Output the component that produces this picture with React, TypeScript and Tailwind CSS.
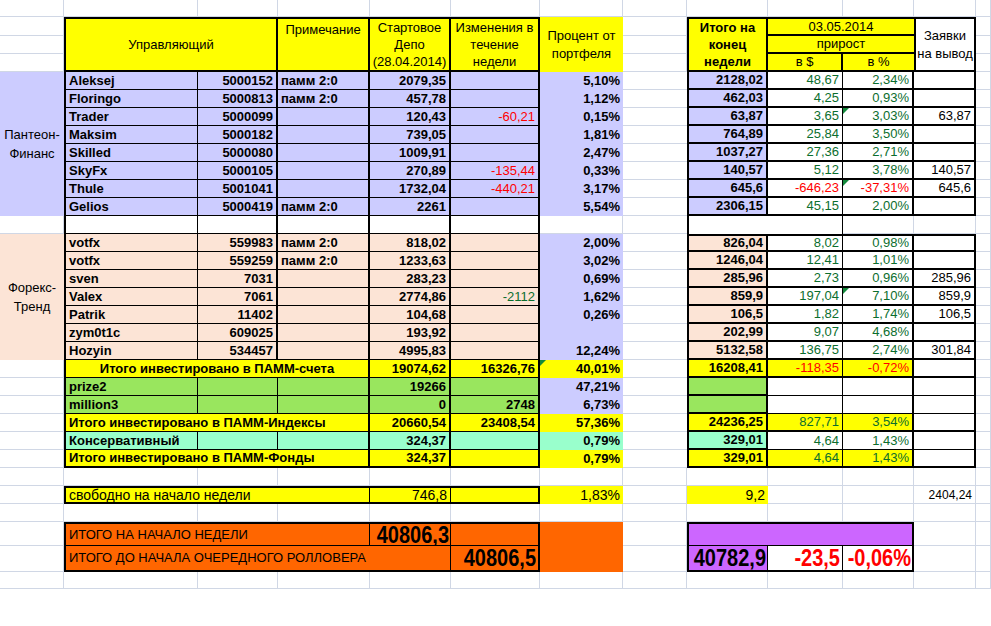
import React from "react";

const A = "w-[64px]";
const B = "w-[134px]";
const C = "w-[80px]";
const D = "w-[92px]";
const E = "w-[81px]";
const F = "w-[89px]";
const G = "w-[83px]";
const H = "w-[64px]";
const I = "w-[81px]";
const J = "w-[75px]";
const K = "w-[71px]";
const L = "w-[62px]";
const M = "w-[15px]";
const COLS = [A, B, C, D, E, F, G, H, I, J, K, L, M];

const GRID = "border-r border-b border-[#d0d7e5]";
const LAV = "bg-[#ccccff]";
const PEACH = "bg-[#fce4d6]";
const YEL = "bg-[#ffff00]";
const LIME = "bg-[#99e65e]";
const MINT = "bg-[#99ffcc]";
const ORANGE = "bg-[#ff6600]";
const VIOLET = "bg-[#cc66ff]";
const RED = "text-[#ff0000]";
const GREEN = "text-[#0b6e2e]";
const BIG = "text-[20px] font-bold";

type CellProps = {
  w: string;
  h?: string;
  p?: string;
  className?: string;
  children?: React.ReactNode;
};

function Cell({ w, h = "h-full", p = "px-[3px]", className = "", children }: CellProps) {
  return (
    <div className={`relative flex shrink-0 items-center overflow-hidden whitespace-nowrap ${w} ${h} ${p} ${className}`}>
      {children}
    </div>
  );
}

// the big totals are set in a tall narrow face in the sheet
function Tall({ children }: { children: React.ReactNode }) {
  return <span className="inline-block scale-y-[1.15]">{children}</span>;
}

// excel's little green "error" corner
function Flag() {
  return <span className="absolute left-0 top-0 h-0 w-0 border-t-[6px] border-r-[6px] border-t-[#138a3c] border-r-transparent" />;
}

function BlankRow({ h }: { h: string }) {
  return (
    <div className={`flex ${h}`}>
      {COLS.map((w, i) => (
        <Cell key={i} w={w} className={GRID} />
      ))}
    </div>
  );
}

function GridStack({ w, hs }: { w: string; hs: string[] }) {
  return (
    <div className="flex flex-col">
      {hs.map((h, i) => (
        <Cell key={i} w={w} h={h} className={GRID} />
      ))}
    </div>
  );
}

type Manager = {
  name: string;
  id: string;
  note: string;
  start: string;
  change: string;
  pct: string;
  end: string;
  usd: string;
  rate: string;
  out: string;
  flag?: boolean;
};

const panteon: Manager[] = [
  { name: "Aleksej", id: "5000152", note: "памм 2:0", start: "2079,35", change: "", pct: "5,10%", end: "2128,02", usd: "48,67", rate: "2,34%", out: "" },
  { name: "Floringo", id: "5000813", note: "памм 2:0", start: "457,78", change: "", pct: "1,12%", end: "462,03", usd: "4,25", rate: "0,93%", out: "" },
  { name: "Trader", id: "5000099", note: "", start: "120,43", change: "-60,21", pct: "0,15%", end: "63,87", usd: "3,65", rate: "3,03%", out: "63,87", flag: true },
  { name: "Maksim", id: "5000182", note: "", start: "739,05", change: "", pct: "1,81%", end: "764,89", usd: "25,84", rate: "3,50%", out: "" },
  { name: "Skilled", id: "5000080", note: "", start: "1009,91", change: "", pct: "2,47%", end: "1037,27", usd: "27,36", rate: "2,71%", out: "" },
  { name: "SkyFx", id: "5000105", note: "", start: "270,89", change: "-135,44", pct: "0,33%", end: "140,57", usd: "5,12", rate: "3,78%", out: "140,57" },
  { name: "Thule", id: "5001041", note: "", start: "1732,04", change: "-440,21", pct: "3,17%", end: "645,6", usd: "-646,23", rate: "-37,31%", out: "645,6", flag: true },
  { name: "Gelios", id: "5000419", note: "памм 2:0", start: "2261", change: "", pct: "5,54%", end: "2306,15", usd: "45,15", rate: "2,00%", out: "" },
];

const forex: Manager[] = [
  { name: "votfx", id: "559983", note: "памм 2:0", start: "818,02", change: "", pct: "2,00%", end: "826,04", usd: "8,02", rate: "0,98%", out: "" },
  { name: "votfx", id: "559259", note: "памм 2:0", start: "1233,63", change: "", pct: "3,02%", end: "1246,04", usd: "12,41", rate: "1,01%", out: "" },
  { name: "sven", id: "7031", note: "", start: "283,23", change: "", pct: "0,69%", end: "285,96", usd: "2,73", rate: "0,96%", out: "285,96" },
  { name: "Valex", id: "7061", note: "", start: "2774,86", change: "-2112", pct: "1,62%", end: "859,9", usd: "197,04", rate: "7,10%", out: "859,9", flag: true },
  { name: "Patrik", id: "11402", note: "", start: "104,68", change: "", pct: "0,26%", end: "106,5", usd: "1,82", rate: "1,74%", out: "106,5" },
  { name: "zym0t1c", id: "609025", note: "", start: "193,92", change: "", pct: "", end: "202,99", usd: "9,07", rate: "4,68%", out: "" },
  { name: "Hozyin", id: "534457", note: "", start: "4995,83", change: "", pct: "12,24%", end: "5132,58", usd: "136,75", rate: "2,74%", out: "301,84" },
];

function ManagerRow({ r, bg, changeColor, first }: { r: Manager; bg: string; changeColor: string; first?: boolean }) {
  const tone = r.usd.startsWith("-") ? RED : GREEN;
  const top = first ? "border-t-2" : "";
  return (
    <div className="flex h-[18px]">
      <Cell w={B} className={`${bg} border-l-2 border-r border-b border-black font-bold`}>{r.name}</Cell>
      <Cell w={C} className={`${bg} justify-end border-r-2 border-b border-black font-bold`}>{r.id}</Cell>
      <Cell w={D} className={`${bg} border-r-2 border-b border-black font-bold`}>{r.note}</Cell>
      <Cell w={E} className={`${bg} justify-end border-r-2 border-b border-black font-bold`}>{r.start}</Cell>
      <Cell w={F} className={`${bg} justify-end border-r-2 border-b border-black ${changeColor}`}>{r.change}</Cell>
      <Cell w={G} className={`${LAV} justify-end font-bold`}>{r.pct}</Cell>
      <Cell w={H} className="border-b border-[#d0d7e5]" />
      <Cell w={I} className={`${bg} justify-end border-l-2 border-r-2 border-b-2 border-black font-bold ${top}`}>{r.end}</Cell>
      <Cell w={J} className={`justify-end border-r border-b-2 border-black ${tone} ${top}`}>{r.usd}</Cell>
      <Cell w={K} className={`justify-end border-r-2 border-b-2 border-black ${tone} ${top}`}>
        {r.flag && <Flag />}
        {r.rate}
      </Cell>
      <Cell w={L} className={`justify-end border-r-2 border-b-2 border-black ${top}`}>{r.out}</Cell>
      <Cell w={M} className={GRID} />
    </div>
  );
}

function Header() {
  return (
    <div className="flex h-[55px]">
      <GridStack w={A} hs={["h-[19px]", "h-[18px]", "h-[18px]"]} />
      <Cell w="w-[214px]" className={`${YEL} justify-center border-2 border-black`}>Управляющий</Cell>
      <Cell w={D} className={`${YEL} justify-center border-y-2 border-r-2 border-black`}>
        <span className="self-start pt-[1px]">Примечание</span>
      </Cell>
      <Cell w={E} className={`${YEL} justify-center border-y-2 border-r-2 border-black`}>
        <span className="text-center leading-[17px]">Стартовое<br />Депо<br />(28.04.2014)</span>
      </Cell>
      <Cell w={F} className={`${YEL} justify-center border-y-2 border-r-2 border-black`}>
        <span className="text-center leading-[17px]">Изменения в<br />течение<br />недели</span>
      </Cell>
      <Cell w={G} className={`${YEL} justify-center`}>
        <span className="text-center leading-[18px]">Процент от<br />портфеля</span>
      </Cell>
      <GridStack w={H} hs={["h-[19px]", "h-[18px]", "h-[18px]"]} />
      <Cell w={I} className={`${YEL} justify-center border-2 border-black font-bold`}>
        <span className="text-center leading-[17px]">Итого на<br />конец<br />недели</span>
      </Cell>
      <div className="flex w-[146px] flex-col">
        <Cell w="w-[146px]" h="h-[19px]" className={`${YEL} justify-center border-t-2 border-b-2 border-black`}>03.05.2014</Cell>
        <Cell w="w-[146px]" h="h-[18px]" className={`${YEL} justify-center border-b-2 border-black`}>прирост</Cell>
        <div className="flex h-[18px]">
          <Cell w={J} className={`${YEL} justify-center border-r-2 border-b-2 border-black`}>в $</Cell>
          <Cell w={K} className={`${YEL} justify-center border-b-2 border-black`}>в %</Cell>
        </div>
      </div>
      <Cell w={L} p="px-0" className="justify-center border-2 border-black bg-white">
        <span className="text-center leading-[18px]">Заявки<br />на вывод</span>
      </Cell>
      <GridStack w={M} hs={["h-[19px]", "h-[18px]", "h-[18px]"]} />
    </div>
  );
}

function SumRow({
  label,
  center,
  bg,
  start,
  change,
  pct,
  end,
  usd,
  rate,
  rightBg,
  tone,
  flag,
  last,
}: {
  label: string;
  center?: boolean;
  bg: string;
  start: string;
  change: string;
  pct: string;
  end: string;
  usd: string;
  rate: string;
  rightBg: string;
  tone: string;
  flag?: boolean;
  last?: boolean;
}) {
  const bot = last ? "border-b-2" : "border-b";
  return (
    <div className="flex h-[18px]">
      <Cell w={A} className={GRID} />
      <Cell w="w-[306px]" className={`${bg} border-l-2 border-r-2 ${bot} border-black font-bold ${center ? "justify-center" : ""}`}>{label}</Cell>
      <Cell w={E} className={`${bg} justify-end border-r-2 ${bot} border-black font-bold`}>{start}</Cell>
      <Cell w={F} className={`${bg} justify-end border-r-2 ${bot} border-black font-bold`}>{change}</Cell>
      <Cell w={G} className={`${bg} justify-end font-bold`}>
        {flag && <Flag />}
        {pct}
      </Cell>
      <Cell w={H} className="border-b border-[#d0d7e5]" />
      <Cell w={I} className={`${bg} justify-end border-l-2 border-r-2 border-b-2 border-black font-bold`}>{end}</Cell>
      <Cell w={J} className={`${rightBg} justify-end border-r border-b-2 border-black ${tone}`}>{usd}</Cell>
      <Cell w={K} className={`${rightBg} justify-end border-r-2 border-b-2 border-black ${tone}`}>{rate}</Cell>
      <Cell w={L} className="border-r-2 border-b-2 border-black" />
      <Cell w={M} className={GRID} />
    </div>
  );
}

function FillRow({
  label,
  bg,
  start,
  change,
  pct,
  pctBg,
  end,
  usd,
  rate,
}: {
  label: string;
  bg: string;
  start: string;
  change: string;
  pct: string;
  pctBg: string;
  end: string;
  usd: string;
  rate: string;
}) {
  return (
    <div className="flex h-[18px]">
      <Cell w={A} className={GRID} />
      <Cell w={B} className={`${bg} border-l-2 border-r border-b border-black font-bold`}>{label}</Cell>
      <Cell w={C} className={`${bg} border-r border-b border-black`} />
      <Cell w={D} className={`${bg} border-r-2 border-b border-black`} />
      <Cell w={E} className={`${bg} justify-end border-r-2 border-b border-black font-bold`}>{start}</Cell>
      <Cell w={F} className={`${bg} justify-end border-r-2 border-b border-black font-bold`}>{change}</Cell>
      <Cell w={G} className={`${pctBg} justify-end font-bold`}>{pct}</Cell>
      <Cell w={H} className="border-b border-[#d0d7e5]" />
      <Cell w={I} className={`${bg} justify-end border-l-2 border-r-2 border-b-2 border-black font-bold`}>{end}</Cell>
      <Cell w={J} className={`justify-end border-r border-b border-black ${GREEN}`}>{usd}</Cell>
      <Cell w={K} className={`justify-end border-r-2 border-b border-black ${GREEN}`}>{rate}</Cell>
      <Cell w={L} className="border-r-2 border-b border-black" />
      <Cell w={M} className={GRID} />
    </div>
  );
}

export default function App() {
  return (
    <div className="min-h-screen w-[991px] overflow-hidden bg-white font-['Liberation_Sans',Arial,sans-serif] text-[13px] text-black">
      <BlankRow h="h-[17px]" />
      <Header />

      {/* Пантеон-Финанс */}
      <div className="flex">
        <Cell w={A} h="h-[144px]" className={`${LAV} justify-center`}>
          <span className="text-center leading-[19px]">Пантеон-<br />Финанс</span>
        </Cell>
        <div className="flex flex-col">
          {panteon.map((r, i) => (
            <ManagerRow key={i} r={r} bg={LAV} changeColor={RED} />
          ))}
        </div>
      </div>

      {/* spacer row */}
      <div className="flex h-[18px]">
        <Cell w={A} className={GRID} />
        <Cell w={B} className="border-l-2 border-r border-b border-black" />
        <Cell w={C} className="border-r-2 border-b border-black" />
        <Cell w={D} className="border-r-2 border-b border-black" />
        <Cell w={E} className="border-r-2 border-b border-black" />
        <Cell w={F} className="border-r-2 border-b border-black" />
        <Cell w={G} className={GRID} />
        <Cell w={H} className="border-b border-[#d0d7e5]" />
        <Cell w={I} className="border-l-2 border-black" />
        <Cell w={J} className="border-r border-black" />
        <Cell w={K} className={GRID} />
        <Cell w={L} className={GRID} />
        <Cell w={M} className={GRID} />
      </div>

      {/* Форекс-Тренд */}
      <div className="flex">
        <Cell w={A} h="h-[126px]" className={`${PEACH} justify-center`}>
          <span className="text-center leading-[19px]">Форекс-<br />Тренд</span>
        </Cell>
        <div className="flex flex-col">
          {forex.map((r, i) => (
            <ManagerRow key={i} r={r} bg={PEACH} changeColor={GREEN} first={i === 0} />
          ))}
        </div>
      </div>

      <SumRow
        label="Итого инвестировано в ПАММ-счета"
        center
        bg={YEL}
        start="19074,62"
        change="16326,76"
        pct="40,01%"
        end="16208,41"
        usd="-118,35"
        rate="-0,72%"
        rightBg={YEL}
        tone={RED}
        flag
      />
      <FillRow label="prize2" bg={LIME} start="19266" change="" pct="47,21%" pctBg={LAV} end="" usd="" rate="" />
      <FillRow label="million3" bg={LIME} start="0" change="2748" pct="6,73%" pctBg={LAV} end="" usd="" rate="" />
      <SumRow
        label="Итого инвестировано в ПАММ-Индексы"
        bg={YEL}
        start="20660,54"
        change="23408,54"
        pct="57,36%"
        end="24236,25"
        usd="827,71"
        rate="3,54%"
        rightBg={YEL}
        tone={GREEN}
      />
      <FillRow label="Консервативный" bg={MINT} start="324,37" change="" pct="0,79%" pctBg={MINT} end="329,01" usd="4,64" rate="1,43%" />
      <SumRow
        label="Итого инвестировано в ПАММ-Фонды"
        bg={YEL}
        start="324,37"
        change=""
        pct="0,79%"
        end="329,01"
        usd="4,64"
        rate="1,43%"
        rightBg={YEL}
        tone={GREEN}
        last
      />

      <BlankRow h="h-[18px]" />

      {/* свободно на начало недели */}
      <div className="flex h-[18px]">
        <Cell w={A} className={GRID} />
        <Cell w="w-[306px]" className={`${YEL} border-2 border-r border-black text-[14px]`}>свободно на начало недели</Cell>
        <Cell w={E} className={`${YEL} justify-end border-y-2 border-r border-black text-[14px]`}>746,8</Cell>
        <Cell w={F} className={`${YEL} border-y-2 border-r-2 border-black`} />
        <Cell w={G} className={`${YEL} justify-end text-[14px]`}>1,83%</Cell>
        <Cell w={H} className={GRID} />
        <Cell w={I} className={`${YEL} justify-end text-[14px]`}>9,2</Cell>
        <Cell w={J} className={GRID} />
        <Cell w={K} className={GRID} />
        <Cell w={L} className={`${GRID} justify-end text-[12px]`}>2404,24</Cell>
        <Cell w={M} className={GRID} />
      </div>

      <BlankRow h="h-[18px]" />

      {/* итоговые суммы */}
      <div className="flex h-[50px]">
        <GridStack w={A} hs={["h-[24px]", "h-[26px]"]} />
        <div className="flex flex-col">
          <div className="flex h-[24px]">
            <Cell w="w-[306px]" className={`${ORANGE} border-t-2 border-l-2 border-r border-b border-black`}>ИТОГО НА НАЧАЛО НЕДЕЛИ</Cell>
            <Cell w={E} p="px-[1px]" className={`${ORANGE} justify-end border-t-2 border-r border-b border-black ${BIG}`}><Tall>40806,3</Tall></Cell>
            <Cell w={F} className={`${ORANGE} border-t-2 border-r-2 border-b border-black`} />
          </div>
          <div className="flex h-[26px]">
            <Cell w="w-[387px]" className={`${ORANGE} border-l-2 border-r border-b-2 border-black`}>ИТОГО ДО НАЧАЛА ОЧЕРЕДНОГО РОЛЛОВЕРА</Cell>
            <Cell w={F} p="px-[2px]" className={`${ORANGE} justify-end border-r-2 border-b-2 border-black ${BIG}`}><Tall>40806,5</Tall></Cell>
          </div>
        </div>
        <Cell w={G} className={ORANGE} />
        <GridStack w={H} hs={["h-[24px]", "h-[26px]"]} />
        <div className="flex flex-col">
          <Cell w="w-[227px]" h="h-[24px]" className={`${VIOLET} border-t-2 border-x-2 border-b border-black`} />
          <div className="flex h-[26px]">
            <Cell w={I} p="px-[1px]" className={`${VIOLET} justify-end border-l-2 border-r border-b-2 border-black ${BIG}`}><Tall>40782,9</Tall></Cell>
            <Cell w={J} p="px-[2px]" className={`justify-end border-r border-b-2 border-black ${BIG} ${RED}`}><Tall>-23,5</Tall></Cell>
            <Cell w={K} p="px-[1px]" className={`justify-end border-r-2 border-b-2 border-black ${BIG} ${RED}`}><Tall>-0,06%</Tall></Cell>
          </div>
        </div>
        <GridStack w={L} hs={["h-[24px]", "h-[26px]"]} />
        <GridStack w={M} hs={["h-[24px]", "h-[26px]"]} />
      </div>

      <BlankRow h="h-[17px]" />
    </div>
  );
}
